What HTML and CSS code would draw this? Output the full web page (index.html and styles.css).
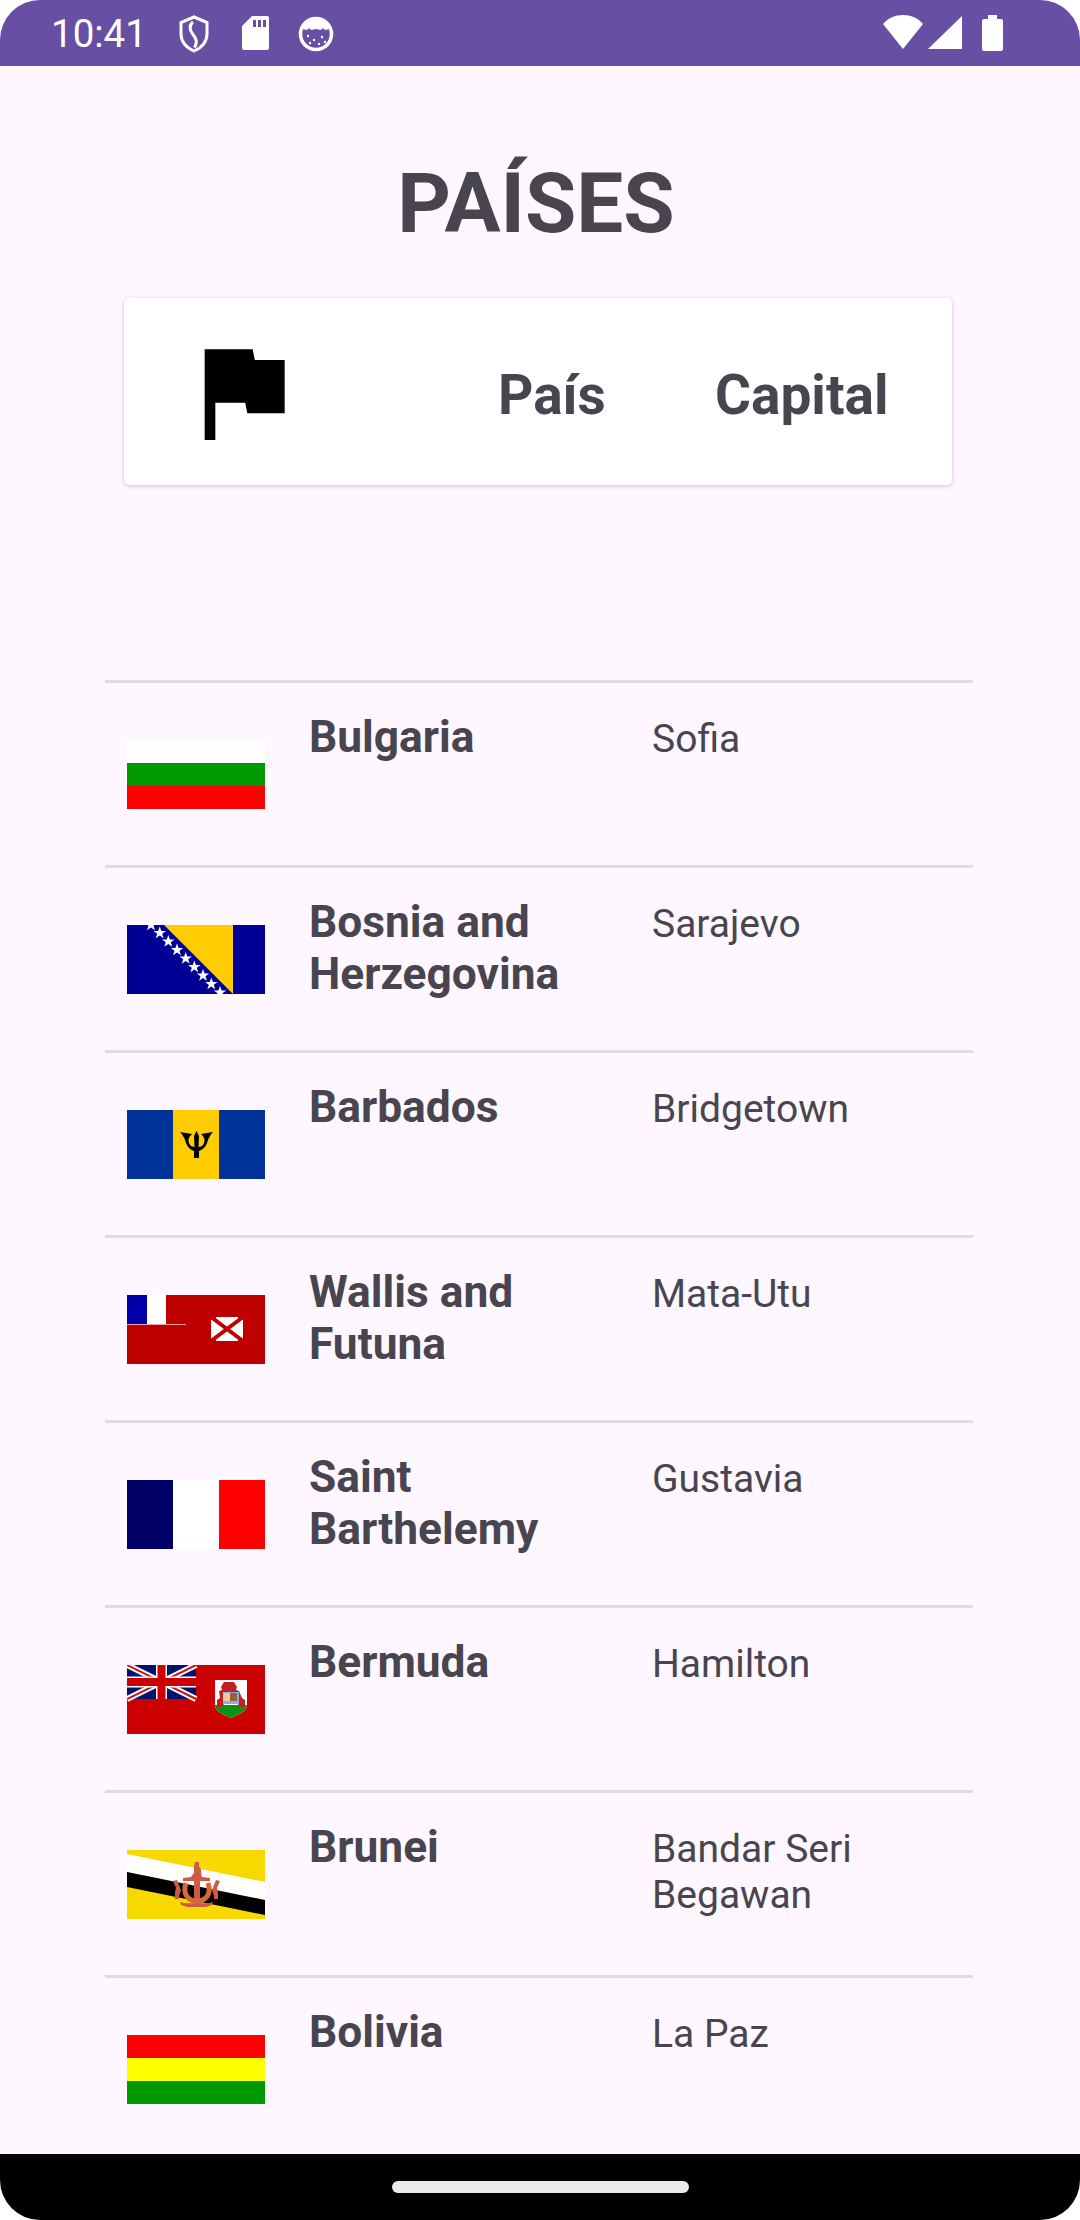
FILE: index.html
```html
<!DOCTYPE html>
<html lang="es">
<head>
<meta charset="utf-8">
<title>Países</title>
<link rel="stylesheet" href="styles.css">
</head>
<body>
<div class="screen">
  <header class="status">
    <div class="status-left">
      <span class="time">10:41</span>
      <svg class="si-shield" width="32" height="38" viewBox="0 0 32 38"><path d="M16 2L3 7.500v11c0 8 5 14 13 17.500 8-3.500 13-9.500 13-17.500v-11z" fill="none" stroke="#fff" stroke-width="3"/><path d="M15 7c-5 4-3 8.500 0 12.500s5 7 1.500 13" fill="none" stroke="#fff" stroke-width="3"/></svg>
      <svg class="si-sd" width="28" height="36" viewBox="0 0 28 36"><path fill-rule="evenodd" d="M11 1h15a2 2 0 0 1 2 2v30a2 2 0 0 1-2 2H3a2 2 0 0 1-2-2V11zM12 5v7h3V5zm5 0v7h3V5zm5 0v7h3V5z" fill="#fff"/></svg>
      <svg class="si-face" width="36" height="36" viewBox="0 0 36 36"><circle cx="18" cy="18" r="15.500" fill="none" stroke="#fff" stroke-width="3.500"/><path d="M4 13C7 6 12 3 18 3s11 3 14 10l-5 1-2-2-2 2-5-1-5 1-2-2-2 2z" fill="#fff"/><g fill="#fff"><circle cx="10" cy="20" r="1.200"/><circle cx="16" cy="24" r="1.200"/><circle cx="24" cy="21" r="1.200"/><circle cx="21" cy="28" r="1.200"/><circle cx="12" cy="27" r="1.200"/><circle cx="27" cy="26" r="1.200"/></g></svg>
    </div>
    <div class="status-right">
      <svg class="si-wifi" width="40" height="34" viewBox="0 0 40 34"><path d="M20 34L0 9C5 3 12 0 20 0s15 3 20 9z" fill="#fff"/></svg>
      <svg class="si-signal" width="34" height="33" viewBox="0 0 34 33"><path d="M34 0v33H0z" fill="#fff"/></svg>
      <svg width="21" height="36" viewBox="0 0 21 36"><path d="M6 0h9v4h4a2 2 0 0 1 2 2v28a2 2 0 0 1-2 2H2a2 2 0 0 1-2-2V6a2 2 0 0 1 2-2h4z" fill="#fff"/></svg>
    </div>
  </header>

  <main class="content">
    <h1 class="title">PAÍSES</h1>
    <section class="card">
      <svg class="flag-icon" viewBox="0 0 24 24"><path d="M14.400 6L14 4H5v17h2v-7h5.600l.4 2h7V6z"/></svg>
      <span class="head head-country">País</span>
      <span class="head head-capital">Capital</span>
    </section>

    <ul class="list">
      <li class="row">
        <svg class="flag" viewBox="0 0 138 69"><rect width="138" height="23" fill="#fff"/><rect y="23" width="138" height="23" fill="#009900"/><rect y="46" width="138" height="23" fill="#f00"/></svg>
        <span class="name">Bulgaria</span><span class="capital">Sofia</span>
      </li>
      <li class="row">
        <svg class="flag" viewBox="0 0 138 69"><rect width="138" height="69" fill="#000094"/><path d="M37 0h69v69z" fill="#fc0"/><g fill="#fff"><path id="s" d="M0-6.500l1.600 4.400h4.600l-3.700 2.800 1.400 4.500L0 2.400l-3.900 2.800 1.400-4.500-3.700-2.800h4.600z" transform="translate(24 0)"/><use href="#s" x="8.700" y="8"/><use href="#s" x="17.300" y="16.500"/><use href="#s" x="26" y="25"/><use href="#s" x="34.700" y="33.500"/><use href="#s" x="43.300" y="42"/><use href="#s" x="52" y="50.500"/><use href="#s" x="60.300" y="59"/><use href="#s" x="69" y="67.500"/></g></svg>
        <span class="name">Bosnia and Herzegovina</span><span class="capital">Sarajevo</span>
      </li>
      <li class="row">
        <svg class="flag" viewBox="0 0 138 69"><rect width="138" height="69" fill="#00339a"/><rect x="46" width="46" height="69" fill="#fc0"/><path d="M69.500 21L72 26 71.500 37C75 37 77 34 77.500 31 78 28 76 26 74 24L86 22C83 25 81 29 80 33 78 38 75 40 72 41V48H67V41C64 40 61 38 59 33 58 29 56 25 53 22L65 24C63 26 61 28 61.500 31 62 34 64 37 67.500 37L67 26z" fill="#000"/></svg>
        <span class="name">Barbados</span><span class="capital">Bridgetown</span>
      </li>
      <li class="row">
        <svg class="flag" viewBox="0 0 138 69"><rect width="138" height="69" fill="#bf0000"/><rect width="20" height="29" fill="#0000a8"/><rect x="20" width="19" height="29" fill="#fff"/><rect y="29" width="59" height="1" fill="#f0a0a0"/><rect x="84" y="22" width="32" height="24" fill="#fff"/><path d="M84 22l32 24M116 22L84 46" stroke="#bf0000" stroke-width="4"/><path d="M84 22h5M111 22h5M84 46h5M111 46h5" stroke="#bf0000" stroke-width="2"/></svg>
        <span class="name">Wallis and Futuna</span><span class="capital">Mata-Utu</span>
      </li>
      <li class="row">
        <svg class="flag" viewBox="0 0 138 69"><rect width="46" height="69" fill="#000066"/><rect x="46" width="46" height="69" fill="#fff"/><rect x="92" width="46" height="69" fill="#f00"/></svg>
        <span class="name">Saint Barthelemy</span><span class="capital">Gustavia</span>
      </li>
      <li class="row">
        <svg class="flag" viewBox="0 0 138 69"><rect width="138" height="69" fill="#cc0000"/><rect width="69" height="34" fill="#00146e"/><path d="M0 0l69 34M69 0L0 34" stroke="#fff" stroke-width="6"/><path d="M0 0l69 34M69 0L0 34" stroke="#cc1020" stroke-width="2"/><path d="M34.500 0v34M0 17h69" stroke="#fff" stroke-width="11"/><path d="M34.500 0v34M0 17h69" stroke="#cc0000" stroke-width="8"/><path d="M88 15h32v25c0 6-7 9-16 13-9-4-16-7-16-13z" fill="#fff"/><path d="M88 40h32c0 6-7 9-16 13-9-4-16-7-16-13z" fill="#109010"/><path d="M93 33l-3 2v7h5l2-3h14l2 3h5v-7l-3-2-3-7-3-1 1-3-3-5h-10l-3 5 1 3-3 1z" fill="#c02020"/><path d="M96 27h16v12H96z" fill="#80b0e8"/><path d="M96 28h7v8h-7z" fill="#f0c8a0"/><path d="M103 28h7v8h-7z" fill="#a06030"/></svg>
        <span class="name">Bermuda</span><span class="capital">Hamilton</span>
      </li>
      <li class="row">
        <svg class="flag" viewBox="0 0 138 69"><rect width="138" height="69" fill="#f7d900"/><path d="M0 4l138 28v18L0 22z" fill="#fff"/><path d="M0 22l138 28v15L0 37z" fill="#000"/><g fill="#cc5a44"><path d="M68 12h4v5l2 2v4l1 4 8 1v3H56v-3l8-1 3-4v-6z"/><path d="M67 30h6v22h-6z"/><path d="M46 31l4-1 4 10-2 6v3h-4v-7l1-4z"/><path d="M93 31l-4-1-4 10 2 6v3h4v-7l-1-4z"/><path d="M53 52c5 2 10 1 17 1s12 1 16-1l-1 3-6 2H60l-6-2z"/></g><path d="M59 33C55 45 62 51 70 51S85 45 81 33" fill="none" stroke="#d8683a" stroke-width="5"/></svg>
        <span class="name">Brunei</span><span class="capital">Bandar Seri Begawan</span>
      </li>
      <li class="row">
        <svg class="flag" viewBox="0 0 138 69"><rect width="138" height="23" fill="#f00"/><rect y="23" width="138" height="23" fill="#ff0"/><rect y="46" width="138" height="23" fill="#009900"/></svg>
        <span class="name">Bolivia</span><span class="capital">La Paz</span>
      </li>
    </ul>
  </main>

  <footer class="nav"><div class="pill"></div></footer>
</div>
</body>
</html>
```
FILE: styles.css
```css
* { box-sizing: border-box; }
html, body { margin: 0; padding: 0; background: #fff; }
.screen {
  width: 1080px; height: 2220px; display: flex; flex-direction: column;
  background: #fef7ff; overflow: hidden; border-radius: 40px;
  font-family: Roboto, "Liberation Sans", sans-serif;
}
.status {
  height: 66px; flex: none; background: #6750a4; display: flex;
  justify-content: space-between; align-items: flex-start; padding: 15px 77px 0 51px; color: #fff;
}
.status-left { display: flex; align-items: flex-start; }
.time { font-size: 38.500px; width: 127px; line-height: 37px; }
.si-shield { margin-right: 31px; }
.si-sd { margin-right: 29px; }
.si-face { margin-top: 1px; }
.status-right { display: flex; align-items: flex-start; }
.si-wifi { margin-right: 5px; }
.si-signal { margin: 1px 20px 0 0; }
.content { flex: 1; min-height: 0; overflow: hidden; display: flex; flex-direction: column; align-items: center; position: relative; }
.title { margin: 89px 0 0 -8px; font-size: 83.500px; line-height: 98px; font-weight: 700; color: #49454f; }
.card {
  margin: 45px 0 0 -4px; width: 828px; height: 187px; flex: none; background: #fff; border-radius: 5px;
  box-shadow: 0 1px 4px rgba(0,0,0,.22); display: flex; align-items: center; position: relative;
}
.flag-icon { width: 128px; height: 128px; margin-left: 54px; flex: none; }
.head { font-size: 55px; font-weight: 700; color: #49454f; line-height: 64px; position: absolute; top: 65px; }
.head-country { left: 374px; }
.head-capital { left: 591px; }
.list { list-style: none; margin: 195px 0 0 -2px; padding: 0; width: 868px; }
.row { height: 185px; border-top: 3px solid #e0dbe2; display: flex; align-items: flex-start; padding-left: 22px; }
.flag { width: 138px; height: 69px; flex: none; margin-top: 57px; }
.name { width: 300px; margin: 28px 43px 0 44px; font-size: 44.300px; line-height: 52px; font-weight: 700; color: #49454f; }
.capital { width: 240px; margin-top: 33px; font-size: 39px; line-height: 46px; color: #49454f; }
.nav { height: 66px; flex: none; background: #000; display: flex; justify-content: center; padding-top: 27px; }
.pill { width: 297px; height: 12px; border-radius: 6px; background: #ebebeb; }
```
